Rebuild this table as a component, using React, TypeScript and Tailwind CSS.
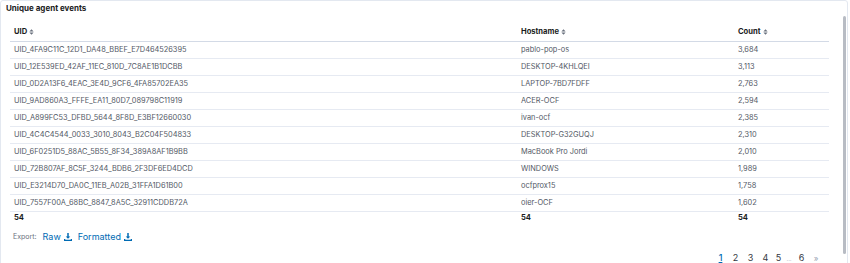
import React from "react";

const rows: [string, string, string][] = [
  ["UID_4FA9C11C_12D1_DA48_BBEF_E7D464526395", "pablo-pop-os", "3,684"],
  ["UID_12E539ED_42AF_11EC_810D_7C8AE1B1DCBB", "DESKTOP-4KHLQEI", "3,113"],
  ["UID_0D2A13F6_4EAC_3E4D_9CF6_4FA85702EA35", "LAPTOP-7BD7FDFF", "2,763"],
  ["UID_9AD860A3_FFFE_EA11_80D7_089798C11919", "ACER-OCF", "2,594"],
  ["UID_A899FC53_DFBD_5644_8F8D_E3BF12660030", "ivan-ocf", "2,385"],
  ["UID_4C4C4544_0033_3010_8043_B2C04F504833", "DESKTOP-G32GUQJ", "2,310"],
  ["UID_6F0251D5_88AC_5B55_8F34_389A8AF1B9BB", "MacBook Pro Jordi", "2,010"],
  ["UID_72B807AF_8C5F_3244_BDB6_2F3DF6ED4DCD", "WINDOWS", "1,989"],
  ["UID_E3214D70_DA0C_11EB_A02B_31FFA1D61B00", "ocfprox15", "1,758"],
  ["UID_7557F00A_68BC_8847_8A5C_32911CDDB72A", "oier-OCF", "1,602"],
];

function SortIcon() {
  return (
    <svg width="5" height="6" viewBox="0 0 5 6" className="ml-[2px] inline-block align-[-0.5px]">
      <path d="M2.5 0.2 L4.6 2.5 H0.4 Z M2.5 5.8 L4.6 3.5 H0.4 Z" fill="#69707d" />
    </svg>
  );
}

function DownloadIcon() {
  return (
    <svg width="8" height="8" viewBox="0 0 16 16" className="ml-[3px] inline-block">
      <path d="M6.5 0h3v7h3L8 11.6 3.5 7h3z M0 12h2.5v1.5h11V12H16v4H0z" fill="#006BB4" />
    </svg>
  );
}

export default function App() {
  return (
    <div
      className="w-[850px] h-[263px] bg-white overflow-hidden"
      style={{ fontFamily: "Inter, 'Noto Sans', sans-serif" }}
    >
      <div className="w-[848px] h-[270px] border border-[#e3e8f0] rounded-[3px] flex flex-col relative">
        <div className="pl-[5px] pt-[2px] h-[15px] text-[8px] font-bold text-[#1a1c21] leading-[10px]">
          Unique agent events
        </div>
        <div className="flex flex-row">
          <div className="w-[828px] pl-[9px] pt-[8px]">
            <table className="w-[819px] border-collapse text-[7.4px] leading-[10px]">
              <colgroup>
                <col className="w-[507px]" />
                <col className="w-[217px]" />
                <col className="w-[95px]" />
              </colgroup>
              <thead>
                <tr className="h-[17px] border-b border-[#d3dae6] text-[#1a1c21] font-bold">
                  <th className="text-left font-bold pl-[4px] align-middle text-[7.6px]">
                    UID<SortIcon />
                  </th>
                  <th className="text-left font-bold pl-[4px] align-middle text-[7.6px]">
                    Hostname<SortIcon />
                  </th>
                  <th className="text-left font-bold pl-[4px] align-middle text-[7.6px]">
                    Count<SortIcon />
                  </th>
                </tr>
              </thead>
              <tbody>
                {rows.map((r) => (
                  <tr key={r[0]} className="h-[17px] border-b border-[#e6eaf2] text-[#535966]">
                    <td className="pl-[4px]">{r[0]}</td>
                    <td className="pl-[4px]">{r[1]}</td>
                    <td className="pl-[4px]">{r[2]}</td>
                  </tr>
                ))}
                <tr className="h-[14px] text-[#1a1c21] font-bold text-[7.6px]">
                  <td className="pl-[4px]">54</td>
                  <td className="pl-[4px]">54</td>
                  <td className="pl-[4px]">54</td>
                </tr>
              </tbody>
            </table>
            <div className="flex items-center mt-[6px] pl-[3px] h-[12px]">
              <span className="text-[7px] text-[#69707d]">Export:</span>
              <span className="ml-[6px] text-[9px] text-[#006BB4] flex items-center">
                Raw<DownloadIcon />
              </span>
              <span className="ml-[6px] text-[9px] text-[#006BB4] flex items-center">
                Formatted<DownloadIcon />
              </span>
            </div>
            <div className="flex justify-end items-center mt-[9px] pr-[6px] text-[9px] text-[#343741] h-[12px]">
              <span className="w-[15px] text-center text-[#006BB4] underline font-medium">1</span>
              <span className="w-[15px] text-center">2</span>
              <span className="w-[15px] text-center">3</span>
              <span className="w-[15px] text-center">4</span>
              <span className="w-[11px] text-center">5</span>
              <span className="w-[10px] text-center text-[6px] text-[#98a2b3]">...</span>
              <span className="w-[15px] text-center">6</span>
              <span className="w-[14px] text-center text-[8px] text-[#98a2b3]">»</span>
            </div>
          </div>
          <div className="w-[19px] flex justify-center pl-[13px]">
            <div className="w-[3px] h-[238px] bg-[#b8bcc4] rounded-[2px]" />
          </div>
        </div>
      </div>
    </div>
  );
}
